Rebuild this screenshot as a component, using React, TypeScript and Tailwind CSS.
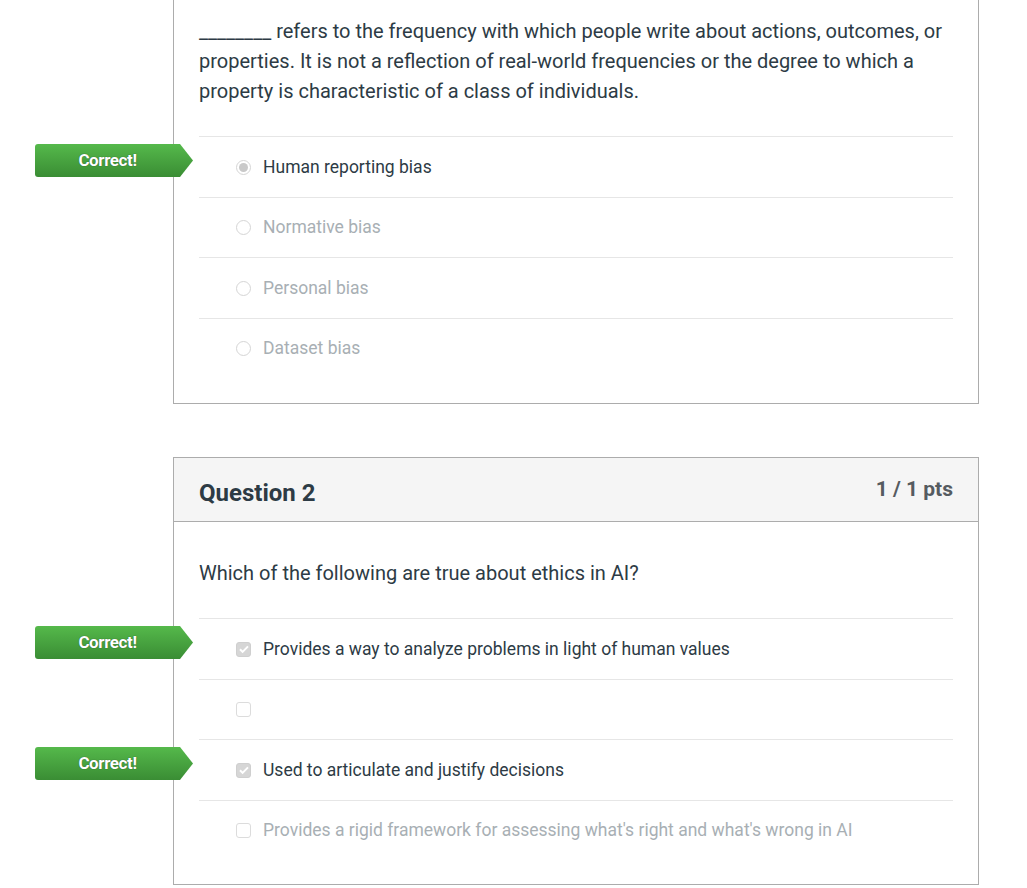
const q1 = [
  { text: 'Human reporting bias', picked: true, correct: true },
  { text: 'Normative bias', picked: false },
  { text: 'Personal bias', picked: false },
  { text: 'Dataset bias', picked: false },
];

const q2 = [
  { text: 'Provides a way to analyze problems in light of human values', picked: true, correct: true },
  { text: '', picked: false },
  { text: 'Used to articulate and justify decisions', picked: true, correct: true },
  { text: "Provides a rigid framework for assessing what's right and what's wrong in AI", picked: false },
];

function CorrectFlag() {
  return (
    <div className="absolute left-[-164px] top-[7px] h-[33px] w-[158px] rounded-l-[3px] bg-gradient-to-b from-[#55b94b] to-[#3a8d34] [clip-path:polygon(0_0,145px_0,158px_50%,145px_100%,0_100%)]">
      <div className="w-[145px] text-center text-[17px] font-bold leading-[33px] tracking-[-0.4px] text-white [text-shadow:0_0_1px_rgba(0,0,0,0.6)]">
        Correct!
      </div>
    </div>
  );
}

function Radio({ on }: { on: boolean }) {
  return (
    <span className="flex h-[15px] w-[15px] items-center justify-center rounded-full border border-[#d5d5d5] bg-white">
      {on && <span className="h-[9px] w-[9px] rounded-full bg-[#c9c9c9]" />}
    </span>
  );
}

function Check({ on }: { on: boolean }) {
  return (
    <span
      className={`flex h-[15px] w-[15px] items-center justify-center rounded-[3px] border ${
        on ? 'border-[#cfcfcf] bg-[#d6d6d6]' : 'border-[#dcdcdc] bg-white'
      }`}
    >
      {on && (
        <svg viewBox="0 0 12 12" className="h-[12px] w-[12px]">
          <path d="M2 6.3l2.6 2.6L10 3.4" fill="none" stroke="#fff" strokeWidth="2" />
        </svg>
      )}
    </span>
  );
}

type Ans = { text: string; picked: boolean; correct?: boolean };

function Answers({ items, kind }: { items: Ans[]; kind: 'radio' | 'check' }) {
  return (
    <div>
      {items.map((a, i) => (
        <div
          key={i}
          className={`relative flex items-center border-t border-[#e6e6e6] ${i % 2 ? 'h-[60px]' : 'h-[61px]'}`}
        >
          {a.correct && <CorrectFlag />}
          <div className="ml-[37px] mr-[12px] flex items-center">
            {kind === 'radio' ? <Radio on={a.picked} /> : <Check on={a.picked} />}
          </div>
          <span className={`text-[17.5px] ${a.picked ? 'text-[#2d3b45]' : 'text-[#a8afb4]'}`}>{a.text}</span>
        </div>
      ))}
    </div>
  );
}

export default function App() {
  return (
    <div className="min-h-[888px] bg-white font-['Roboto',sans-serif] text-[#2d3b45]">
      <div className="ml-[173px] w-[806px]">
        {/* Question 1 (scrolled, header off screen) */}
        <div className="border border-t-0 border-[#acacac] px-[25px] pb-[25px] pt-[16px]">
          <p className="mb-[30px] text-[20px] leading-[30px]">
            ________ refers to the frequency with which people write about actions, outcomes, or
            properties. It is not a reflection of real-world frequencies or the degree to which a
            property is characteristic of a class of individuals.
          </p>
          <Answers items={q1} kind="radio" />
        </div>

        {/* Question 2 */}
        <div className="mt-[53px] border border-[#acacac]">
          <div className="flex h-[64px] items-start justify-between border-b border-[#acacac] bg-[#f5f5f5] px-[25px]">
            <h2 className="pt-[21px] text-[24px] font-bold leading-[28px]">Question 2</h2>
            <span className="pt-[19px] text-[21px] font-bold leading-[24px] text-[#555b60]">1 / 1 pts</span>
          </div>
          <div className="px-[25px] pb-[24px] pt-[36px]">
            <p className="mb-[30px] text-[20px] leading-[30px]">Which of the following are true about ethics in AI?</p>
            <Answers items={q2} kind="check" />
          </div>
        </div>
      </div>
    </div>
  );
}
